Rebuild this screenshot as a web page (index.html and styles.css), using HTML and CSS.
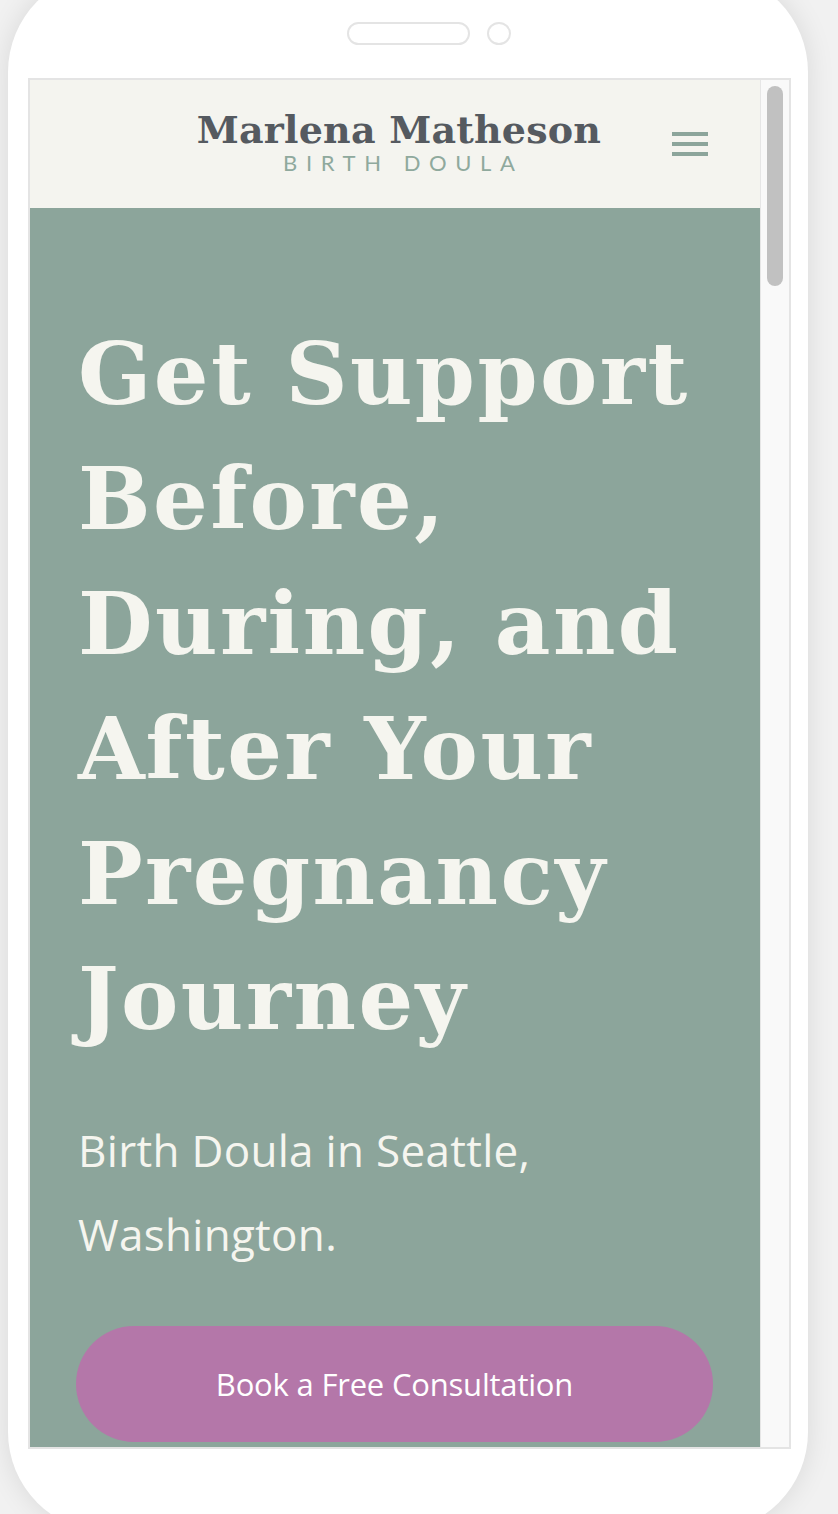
FILE: index.html
```html
<!DOCTYPE html>
<html lang="en">
<head>
<meta charset="utf-8">
<title>Marlena Matheson – Birth Doula</title>
<link rel="stylesheet" href="styles.css">
</head>
<body>
  <div class="phone">
    <div class="notch">
      <span class="speaker"></span>
      <span class="camera"></span>
    </div>
    <div class="screen">
      <div class="viewport">
        <header class="site-header">
          <div class="brand">
            <div class="brand-name">Marlena Matheson</div>
            <div class="brand-tag">BIRTH DOULA</div>
          </div>
          <button class="menu-btn" aria-label="Menu">
            <span></span><span></span><span></span>
          </button>
        </header>
        <section class="hero">
          <h1 class="hero-title">Get Support Before, During, and After Your Pregnancy Journey</h1>
          <p class="hero-sub">Birth Doula in Seattle, Washington.</p>
          <a class="cta" href="#">Book a Free Consultation</a>
        </section>
      </div>
      <div class="scrollbar"><div class="thumb"></div></div>
    </div>
  </div>
</body>
</html>
```
FILE: styles.css
```css
html, body {
  margin: 0;
  height: 100%;
  overflow: hidden;
}
body {
  background: #f1f1f1;
}
.phone {
  box-sizing: border-box;
  width: 800px;
  height: 1560px;
  margin: -28px 0 0 8px;
  padding: 50px 20px 0 20px;
  background: #ffffff;
  border-radius: 100px;
  box-shadow: 0 0 28px rgba(0, 0, 0, 0.10);
}
.notch {
  display: grid;
  grid-template-columns: 1fr auto 1fr;
  align-items: center;
  height: 23px;
  margin-left: -20px;
  margin-right: -20px;
}
.speaker {
  grid-column: 2;
  box-sizing: border-box;
  width: 123px;
  height: 23px;
  border: 2px solid #e4e4e4;
  border-radius: 12px;
}
.camera {
  grid-column: 3;
  justify-self: start;
  box-sizing: border-box;
  width: 24px;
  height: 23px;
  margin-left: 17px;
  border: 2px solid #e4e4e4;
  border-radius: 50%;
}
.screen {
  display: flex;
  width: 763px;
  height: 1371px;
  margin-top: 33px;
  box-sizing: border-box;
  border: 2px solid #e4e4e4;
  overflow: hidden;
}
.viewport {
  width: 730px;
  flex: none;
}
.scrollbar {
  flex: 1;
  background: #f9f9f9;
  border-left: 1px solid #e6e6e6;
  padding: 6px 0 0 6px;
}
.thumb {
  width: 16px;
  height: 200px;
  border-radius: 8px;
  background: #c1c1c1;
}
.site-header {
  box-sizing: border-box;
  height: 128px;
  padding-top: 30px;
  background: #f4f4ef;
  display: grid;
  grid-template-columns: 1fr auto 1fr;
  align-items: start;
}
.brand {
  grid-column: 2;
  text-align: center;
  padding-left: 8px;
}
.brand-name {
  font-family: "DejaVu Serif", "Liberation Serif", serif;
  font-weight: bold;
  font-size: 38px;
  line-height: 40px;
  letter-spacing: 0.2px;
  color: #555a60;
}
.brand-tag {
  font-family: Lato, "Liberation Sans", sans-serif;
  font-weight: 400;
  font-size: 22px;
  line-height: 26px;
  letter-spacing: 8.6px;
  color: #8fa99d;
  margin-right: -8.6px;
}
.menu-btn {
  grid-column: 3;
  justify-self: end;
  margin: 22px 52px 0 0;
  padding: 0;
  border: 0;
  background: none;
  width: 36px;
  display: flex;
  flex-direction: column;
  gap: 6px;
}
.menu-btn span {
  display: block;
  height: 4px;
  background: #8ca59b;
}
.hero {
  background: #8ca59b;
  padding: 103px 47px 60px 46px;
}
.hero-title {
  margin: 0 0 0 2px;
  font-family: "DejaVu Serif", "Liberation Serif", serif;
  font-weight: bold;
  font-size: 86px;
  line-height: 125px;
  letter-spacing: 2.4px;
  color: #f5f5ef;
}
.hero-sub {
  margin: 47px 0 0 2px;
  font-family: "Open Sans", "Liberation Sans", sans-serif;
  font-weight: 400;
  font-size: 44px;
  line-height: 84px;
  letter-spacing: 0.3px;
  color: #f5f5ef;
}
.cta {
  display: flex;
  align-items: center;
  justify-content: center;
  height: 116px;
  margin-top: 50px;
  border-radius: 58px;
  background: #b477a9;
  color: #ffffff;
  text-decoration: none;
  font-family: "Open Sans", "Liberation Sans", sans-serif;
  font-weight: 500;
  font-size: 31px;
  letter-spacing: -0.2px;
}
```
